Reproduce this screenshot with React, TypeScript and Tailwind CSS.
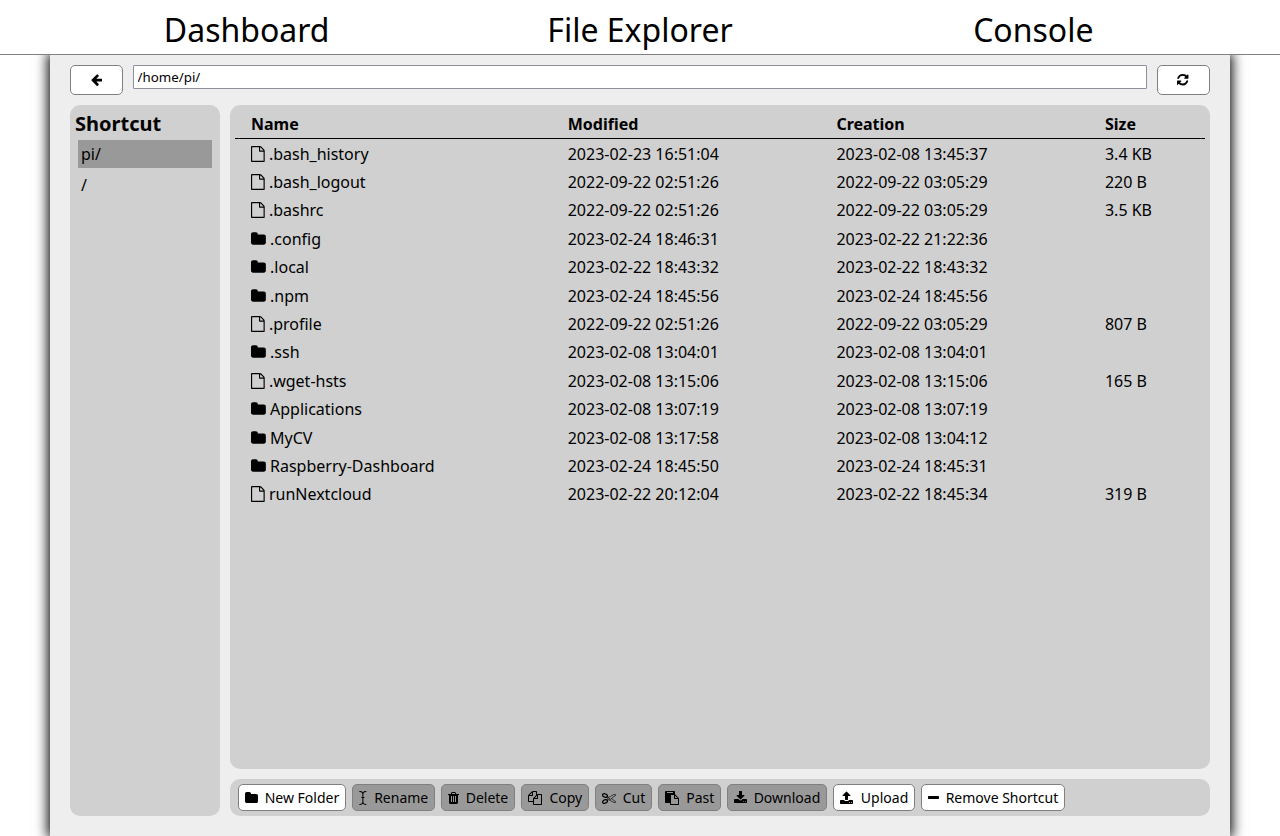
import React from "react";

type Glyph = { x: number; w: number; d: string };

// Outlines on a 1792-unit square; x and w give the horizontal advance box.
const glyphs = {
  file: { x: 128, w: 1536, d: "M1596 380q28 28 48 76t20 88v1152q0 40-28 68t-68 28h-1344q-40 0-68-28t-28-68v-1600q0-40 28-68t68-28h896q40 0 88 20t76 48zm-444-244v376h376q-10-29-22-41l-313-313q-12-12-41-22zm384 1528v-1024h-416q-40 0-68-28t-28-68v-416h-768v1536h1280z" },
  folder: { x: 64, w: 1664, d: "M1728 608v704q0 92-66 158t-158 66h-1216q-92 0-158-66t-66-158v-960q0-92 66-158t158-66h320q92 0 158 66t66 158v32h672q92 0 158 66t66 158z" },
  cursor: { x: 336, w: 1024, d: "M1216 128q-320 0-320 224v416h128v128h-128v544q0 224 320 224h64v128h-64q-272 0-384-146-112 146-384 146h-64v-128h64q320 0 320-224v-544h-128v-128h128v-416q0-224-320-224h-64v-128h64q272 0 384 146 112-146 384-146h64v128h-64z" },
  trash: { x: 192, w: 1408, d: "M704 1376v-704q0-14-9-23t-23-9h-64q-14 0-23 9t-9 23v704q0 14 9 23t23 9h64q14 0 23-9t9-23zm256 0v-704q0-14-9-23t-23-9h-64q-14 0-23 9t-9 23v704q0 14 9 23t23 9h64q14 0 23-9t9-23zm256 0v-704q0-14-9-23t-23-9h-64q-14 0-23 9t-9 23v704q0 14 9 23t23 9h64q14 0 23-9t9-23zm-544-992h448l-48-117q-7-9-17-11h-317q-10 2-17 11zm928 32v64q0 14-9 23t-23 9h-96v948q0 83-47 143.5t-113 60.5h-832q-66 0-113-58.5t-47-141.5v-952h-96q-14 0-23-9t-9-23v-64q0-14 9-23t23-9h309l70-167q15-37 54-63t79-26h320q40 0 79 26t54 63l70 167h309q14 0 23 9t9 23z" },
  copy: { x: 0, w: 1792, d: "M1696 384q40 0 68 28t28 68v1216q0 40-28 68t-68 28h-960q-40 0-68-28t-28-68v-288h-544q-40 0-68-28t-28-68v-672q0-40 20-88t48-76l408-408q28-28 76-48t88-20h416q40 0 68 28t28 68v328q68-40 128-40h416zm-544 213l-299 299h299v-299zm-640-384l-299 299h299v-299zm196 647l316-316v-416h-384v416q0 40-28 68t-68 28h-416v640h512v-256q0-40 20-88t48-76zm956 804v-1152h-384v416q0 40-28 68t-68 28h-416v640h896z" },
  cut: { x: 0, w: 1792, d: "M960 896q26 0 45 19t19 45-19 45-45 19-45-19-19-45 19-45 45-19zm300 64l507 398q28 20 25 56-5 35-35 51l-128 64q-13 7-29 7-17 0-31-8l-690-387-110 66q-8 4-12 5 14 49 10 97-7 77-56 147.5t-132 123.5q-132 84-277 84-136 0-222-78-90-84-79-207 7-76 56-147t131-124q132-84 278-84 83 0 151 31 9-13 22-22l122-73-122-73q-13-9-22-22-68 31-151 31-146 0-278-84-82-53-131-124t-56-147q-5-59 15.5-113t63.5-93q85-79 222-79 145 0 277 84 83 52 132 123t56 148q4 48-10 97 4 1 12 5l110 66 690-387q14-8 31-8 16 0 29 7l128 64q30 16 35 51 3 36-25 56zm-681-260q46-42 21-108t-106-117q-92-59-192-59-74 0-113 36-46 42-21 108t106 117q92 59 192 59 74 0 113-36zm-85 745q81-51 106-117t-21-108q-39-36-113-36-100 0-192 59-81 51-106 117t21 108q39 36 113 36 100 0 192-59zm178-613l96 58v-11q0-36 33-56l14-8-79-44-26 26q-3 3-10 11t-12 12q-2 2-4 3.5t-3 2.5zm224 224l96 32 736-576-128-64-768 431v113l-160 96 9 8q2 2 7 6 4 4 11 12t11 12l26 26zm704 416l128-64-520-408-177 138q-2 3-13 7z" },
  paste: { x: 0, w: 1792, d: "M768 1664h896v-640h-416q-40 0-68-28t-28-68v-416h-384v1152zm256-1440v-64q0-13-9.5-22.5t-22.5-9.5h-704q-13 0-22.5 9.5t-9.5 22.5v64q0 13 9.5 22.5t22.5 9.5h704q13 0 22.5-9.5t9.5-22.5zm256 672h299l-299-299v299zm512 128v672q0 40-28 68t-68 28h-960q-40 0-68-28t-28-68v-160h-544q-40 0-68-28t-28-68v-1344q0-40 28-68t68-28h1088q40 0 68 28t28 68v328q21 13 36 28l408 408q28 28 48 76t20 88z" },
  download: { x: 64, w: 1664, d: "M1344 1344q0-26-19-45t-45-19-45 19-19 45 19 45 45 19 45-19 19-45zm256 0q0-26-19-45t-45-19-45 19-19 45 19 45 45 19 45-19 19-45zm128-224v320q0 40-28 68t-68 28h-1472q-40 0-68-28t-28-68v-320q0-40 28-68t68-28h465l135 136q58 56 136 56t136-56l136-136h464q40 0 68 28t28 68zm-325-569q17 41-14 70l-448 448q-18 19-45 19t-45-19l-448-448q-31-29-14-70 17-39 59-39h256v-448q0-26 19-45t45-19h256q26 0 45 19t19 45v448h256q42 0 59 39z" },
  upload: { x: 64, w: 1664, d: "M1344 1472q0-26-19-45t-45-19-45 19-19 45 19 45 45 19 45-19 19-45zm256 0q0-26-19-45t-45-19-45 19-19 45 19 45 45 19 45-19 19-45zm128-224v320q0 40-28 68t-68 28h-1472q-40 0-68-28t-28-68v-320q0-40 28-68t68-28h427q21 56 70.5 92t110.5 36h256q61 0 110.5-36t70.5-92h427q40 0 68 28t28 68zm-325-648q-17 40-59 40h-256v448q0 26-19 45t-45 19h-256q-26 0-45-19t-19-45v-448h-256q-42 0-59-40-17-39 14-69l448-448q18-19 45-19t45 19l448 448q31 30 14 69z" },
  minus: { x: 192, w: 1408, d: "M1600 736v192q0 40-28 68t-68 28h-1216q-40 0-68-28t-28-68v-192q0-40 28-68t68-28h1216q40 0 68 28t28 68z" },
  refresh: { x: 128, w: 1536, d: "M1639 1056q0 5-1 7-64 268-268 434.5t-478 166.5q-146 0-282.5-55t-243.5-157l-129 129q-19 19-45 19t-45-19-19-45v-448q0-26 19-45t45-19h448q26 0 45 19t19 45-19 45l-137 137q71 66 161 102t187 36q134 0 250-65t186-179q11-17 53-117 8-23 30-23h192q13 0 22.5 9.5t9.5 22.5zm25-800v448q0 26-19 45t-45 19h-448q-26 0-45-19t-19-45 19-45l138-138q-148-137-349-137-134 0-250 65t-186 179q-11 17-53 117-8 23-30 23h-199q-13 0-22.5-9.5t-9.5-22.5v-7q65-268 270-434.5t480-166.5q146 0 284 55.5t245 156.5l130-129q19-19 45-19t45 19 19 45z" },
  back: { x: 128, w: 1536, d: "M1664 896v128q0 53-32.5 90.5t-84.5 37.5h-704l293 294q38 36 38 90t-38 90l-75 76q-37 37-90 37-52 0-91-37l-651-652q-37-37-37-90 0-52 37-91l651-650q38-38 91-38 52 0 90 38l75 74q38 38 38 91t-38 91l-293 293h704q52 0 84.5 37.5t32.5 90.5z" },
} satisfies Record<string, Glyph>;

type IconName = keyof typeof glyphs;

function Icon({ name, size, className = "" }: { name: IconName; size: number; className?: string }) {
  const g = glyphs[name];
  return (
    <svg
      viewBox={`${g.x} 0 ${g.w} 1792`}
      width={(size * g.w) / 1792}
      height={size}
      fill="currentColor"
      className={`shrink-0 ${className}`}
      aria-hidden="true"
    >
      <path d={g.d} />
    </svg>
  );
}

type Entry = { name: string; modified: string; created: string; size?: string };

const entries: Entry[] = [
  { name: ".bash_history", modified: "2023-02-23 16:51:04", created: "2023-02-08 13:45:37", size: "3.4 KB" },
  { name: ".bash_logout", modified: "2022-09-22 02:51:26", created: "2022-09-22 03:05:29", size: "220 B" },
  { name: ".bashrc", modified: "2022-09-22 02:51:26", created: "2022-09-22 03:05:29", size: "3.5 KB" },
  { name: ".config", modified: "2023-02-24 18:46:31", created: "2023-02-22 21:22:36" },
  { name: ".local", modified: "2023-02-22 18:43:32", created: "2023-02-22 18:43:32" },
  { name: ".npm", modified: "2023-02-24 18:45:56", created: "2023-02-24 18:45:56" },
  { name: ".profile", modified: "2022-09-22 02:51:26", created: "2022-09-22 03:05:29", size: "807 B" },
  { name: ".ssh", modified: "2023-02-08 13:04:01", created: "2023-02-08 13:04:01" },
  { name: ".wget-hsts", modified: "2023-02-08 13:15:06", created: "2023-02-08 13:15:06", size: "165 B" },
  { name: "Applications", modified: "2023-02-08 13:07:19", created: "2023-02-08 13:07:19" },
  { name: "MyCV", modified: "2023-02-08 13:17:58", created: "2023-02-08 13:04:12" },
  { name: "Raspberry-Dashboard", modified: "2023-02-24 18:45:50", created: "2023-02-24 18:45:31" },
  { name: "runNextcloud", modified: "2023-02-22 20:12:04", created: "2023-02-22 18:45:34", size: "319 B" },
];

const actions: { icon: IconName; label: string; enabled: boolean; width: string }[] = [
  { icon: "folder", label: "New Folder", enabled: true, width: "w-[108px]" },
  { icon: "cursor", label: "Rename", enabled: false, width: "w-[83px]" },
  { icon: "trash", label: "Delete", enabled: false, width: "w-[74px]" },
  { icon: "copy", label: "Copy", enabled: false, width: "w-[68px]" },
  { icon: "cut", label: "Cut", enabled: false, width: "w-[57px]" },
  { icon: "paste", label: "Past", enabled: false, width: "w-[63px]" },
  { icon: "download", label: "Download", enabled: false, width: "w-[100px]" },
  { icon: "upload", label: "Upload", enabled: true, width: "w-[82px]" },
  { icon: "minus", label: "Remove Shortcut", enabled: true, width: "w-[144px]" },
];

const columns = "grid grid-cols-[316.7px_268.7px_268.6px_1fr] pl-4";

export default function App() {
  return (
    <div className="flex h-[836px] flex-col overflow-hidden bg-white font-['Noto_Sans',sans-serif] text-base text-black">
      <nav className="z-10 grid h-[55px] shrink-0 grid-cols-3 border-b border-[#808080] bg-white px-[50px] pt-2 text-center text-[32px] leading-[44px]">
        <a>Dashboard</a>
        <a>File Explorer</a>
        <a>Console</a>
      </nav>

      <main className="mx-[50px] flex min-h-0 flex-1 flex-col bg-[#eeeeee] px-5 pt-2.5 pb-5 shadow-[0_0_12px_2px_#000]">
        <div className="flex h-[30px] shrink-0 items-start gap-2.5">
          <button className="flex h-[30px] w-[53px] items-center justify-center rounded-[5px] border border-[#808080] bg-white">
            <Icon name="back" size={13.333} />
          </button>
          <input
            className="h-6 min-w-0 flex-1 rounded-[1px] border border-[#8f8f9d] bg-white px-[3.5px] text-[13.333px]"
            defaultValue="/home/pi/"
          />
          <button className="flex h-[30px] w-[53px] items-center justify-center rounded-[5px] border border-[#808080] bg-white pr-px">
            <Icon name="refresh" size={13.333} />
          </button>
        </div>

        <div className="mt-2.5 flex min-h-0 flex-1 gap-2.5">
          <aside className="w-[150px] shrink-0 rounded-[10px] bg-[#d0d0d0] px-[5px] pt-[5px]">
            <h2 className="text-xl leading-[27px] font-bold">Shortcut</h2>
            <ul className="mt-[3px] flex flex-col gap-[3px] px-[3px]">
              <li className="h-7 bg-[#999999] pl-[3px] leading-7">pi/</li>
              <li className="h-7 pl-[3px] leading-7">/</li>
            </ul>
          </aside>

          <div className="flex min-w-0 flex-1 flex-col gap-2.5">
            <section className="flex-1 rounded-[10px] bg-[#d0d0d0] px-[5px] pt-[5px]">
              <div className={`${columns} h-[29px] border-b border-black leading-7 font-bold`}>
                <span>Name</span>
                <span>Modified</span>
                <span>Creation</span>
                <span>Size</span>
              </div>
              <div className="pt-[0.66px]">
                {entries.map((entry) => (
                  <div key={entry.name} className={`${columns} h-[28.391px] leading-[28px]`}>
                    <span className="flex h-7 items-center gap-[4.2px]">
                      <Icon name={entry.size ? "file" : "folder"} size={16} />
                      {entry.name}
                    </span>
                    <span>{entry.modified}</span>
                    <span>{entry.created}</span>
                    <span>{entry.size}</span>
                  </div>
                ))}
              </div>
            </section>

            <footer className="flex h-[37px] shrink-0 items-center gap-1.5 rounded-[10px] bg-[#d0d0d0] px-2">
              {actions.map((action) => (
                <button
                  key={action.label}
                  className={`flex h-[27px] items-center justify-between rounded-[5px] border border-[#808080] pr-[5.75px] pl-1.5 text-sm whitespace-nowrap ${action.width} ${
                    action.enabled ? "bg-white" : "bg-[#999999]"
                  }`}
                >
                  <Icon name={action.icon} size={14} />
                  {action.label}
                </button>
              ))}
            </footer>
          </div>
        </div>
      </main>
    </div>
  );
}
